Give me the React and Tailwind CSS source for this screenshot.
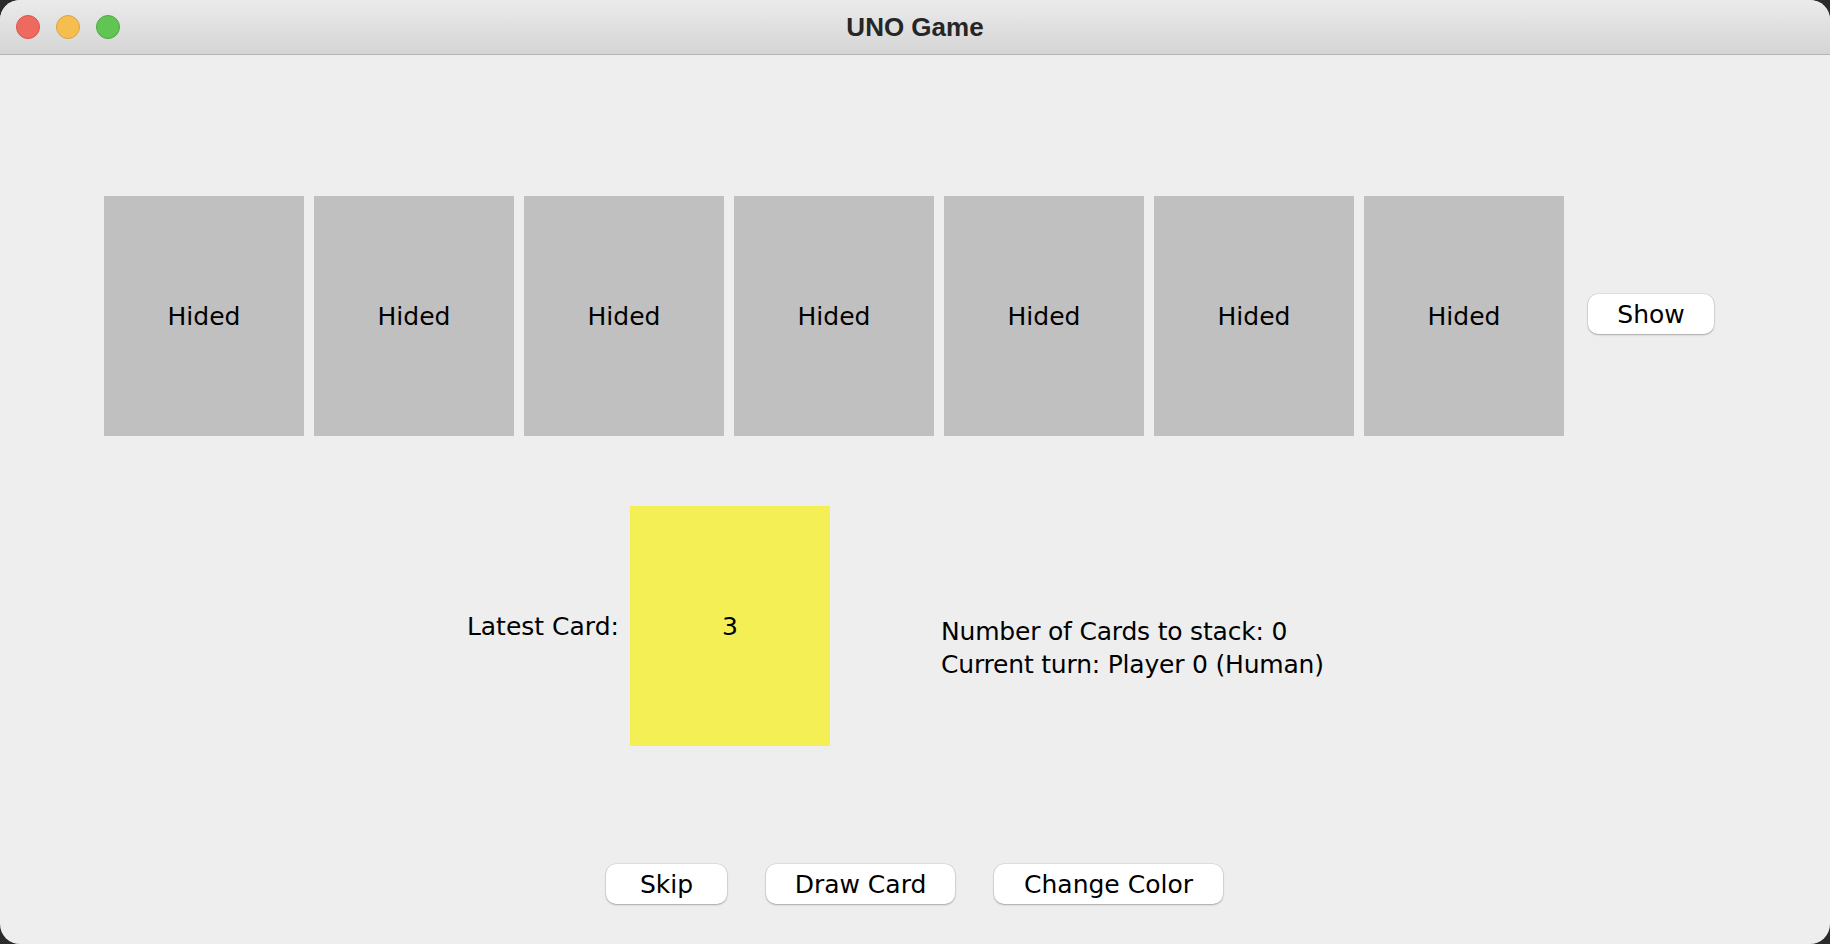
import React from 'react';

const FONT = { fontFamily: '"DejaVu Sans", sans-serif' };

function TrafficLights() {
  return (
    <div className="flex items-center gap-4 pl-4">
      <span className="h-6 w-6 rounded-full border border-[#d9534a] bg-[#ee6a5f]" />
      <span className="h-6 w-6 rounded-full border border-[#d9a441] bg-[#f5be4f]" />
      <span className="h-6 w-6 rounded-full border border-[#4fa83f] bg-[#61c554]" />
    </div>
  );
}

function HiddenCard() {
  return (
    <div className="flex h-[240px] w-[200px] shrink-0 items-center justify-center bg-[#c0c0c0] text-[25px] leading-[33px] text-black">
      Hided
    </div>
  );
}

function MacButton({ children, width }) {
  return (
    <button
      className={`flex h-10 ${width} items-center justify-center rounded-[10px] bg-white text-[25px] leading-[33px] text-black shadow-[0_1px_2px_rgba(0,0,0,0.25),0_0_0_0.5px_rgba(0,0,0,0.12)]`}
    >
      {children}
    </button>
  );
}

export default function App() {
  const cards = [0, 1, 2, 3, 4, 5, 6];

  return (
    <div className="h-[944px] w-[1830px] overflow-hidden bg-[#2b2b2b]" style={FONT}>
      <div className="flex h-full w-full flex-col overflow-hidden rounded-[20px] bg-[#eeeeee]">
        {/* title bar */}
        <div className="grid h-[55px] shrink-0 grid-cols-[1fr_auto_1fr] items-center border-b border-[#b4b4b4] bg-gradient-to-b from-[#ebebeb] to-[#d5d5d5]">
          <TrafficLights />
          <div
            className="text-[26px] font-bold text-[#262626]"
            style={{ fontFamily: '"Liberation Sans", Arial, sans-serif' }}
          >
            UNO Game
          </div>
          <div />
        </div>

        {/* opponent hand */}
        <div className="mt-[141px] flex items-center pl-[104px]">
          <div className="flex gap-[10px]">
            {cards.map((c) => (
              <HiddenCard key={c} />
            ))}
          </div>
          <div className="ml-6 -mt-1">
            <MacButton width="w-[126px]">Show</MacButton>
          </div>
        </div>

        {/* table */}
        <div className="mt-[70px] flex items-start">
          <div className="flex w-[619px] shrink-0 justify-end self-center text-[25px] leading-[33px] text-black">
            Latest Card:
          </div>
          <div className="ml-[11px] flex h-[240px] w-[200px] shrink-0 items-center justify-center bg-[#f3ef54] text-[25px] leading-[33px] text-black">
            3
          </div>
          <div className="ml-[111px] mt-[109px] text-[25px] leading-[33px] tracking-[-0.2px] text-black">
            <div>Number of Cards to stack: 0</div>
            <div>Current turn: Player 0 (Human)</div>
          </div>
        </div>

        {/* actions */}
        <div className="mt-[118px] flex items-center gap-[39px] pl-[606px]">
          <MacButton width="w-[121px]">Skip</MacButton>
          <MacButton width="w-[189px]">Draw Card</MacButton>
          <MacButton width="w-[229px]">Change Color</MacButton>
        </div>
      </div>
    </div>
  );
}
